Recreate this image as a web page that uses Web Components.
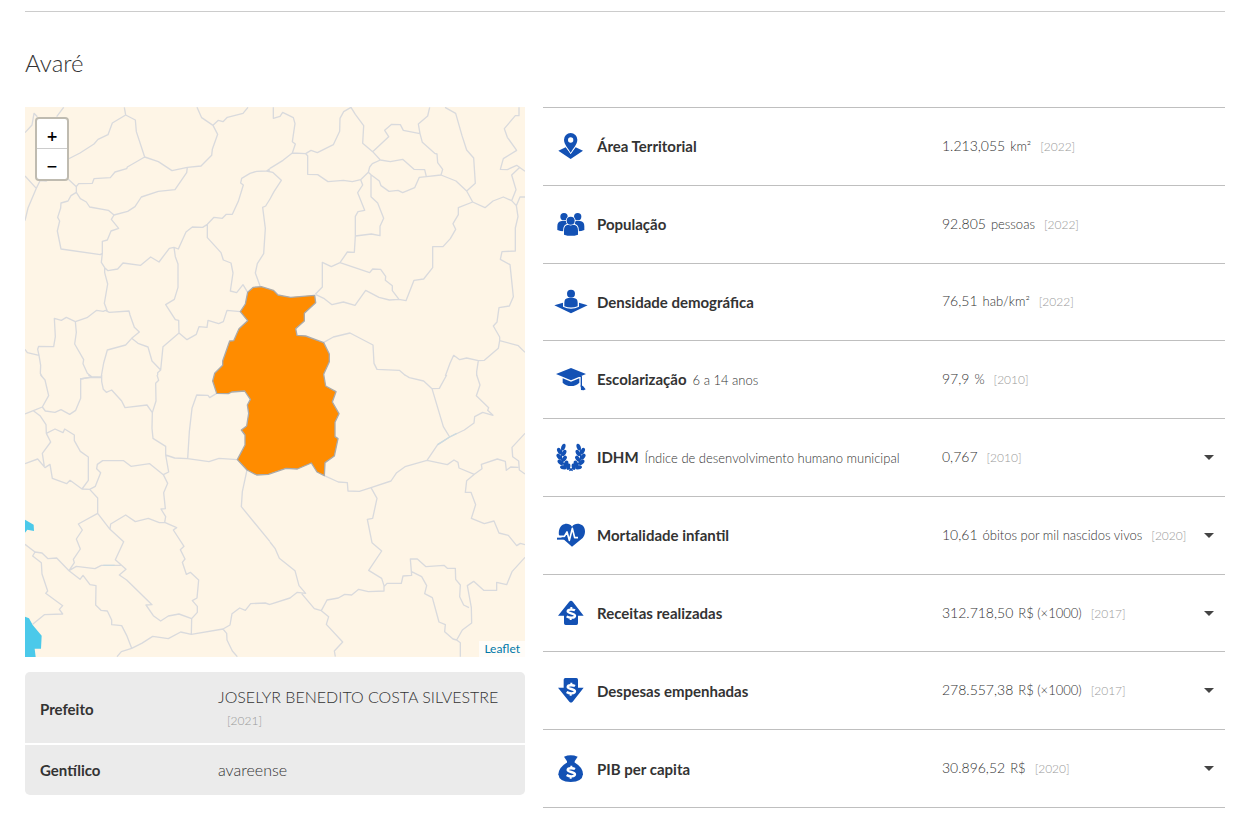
<!DOCTYPE html>
<html lang="pt-BR">
<head>
<meta charset="utf-8">
<title>Avaré</title>
<style>
  body { margin: 0; background: #fff; color: #333; font-family: Lato, "Open Sans", sans-serif; }
</style>
</head>
<body>
<city-panel>
  <span slot="title">Avaré</span>
  <city-map slot="map"></city-map>
  <city-facts slot="facts"></city-facts>
  <city-indicator icon="area" value="1.213,055" unit="km²" year="2022">Área Territorial</city-indicator>
  <city-indicator icon="people" value="92.805" unit="pessoas" year="2022">População</city-indicator>
  <city-indicator icon="density" value="76,51" unit="hab/km²" year="2022">Densidade demográfica</city-indicator>
  <city-indicator icon="school" value="97,9" unit="%" year="2010" note="6 a 14 anos">Escolarização</city-indicator>
  <city-indicator icon="laurel" value="0,767" year="2010" note="Índice de desenvolvimento humano municipal" expandable>IDHM</city-indicator>
  <city-indicator icon="heart" value="10,61" unit="óbitos por mil nascidos vivos" year="2020" expandable>Mortalidade infantil</city-indicator>
  <city-indicator icon="income" value="312.718,50" unit="R$ (×1000)" year="2017" expandable>Receitas realizadas</city-indicator>
  <city-indicator icon="expense" value="278.557,38" unit="R$ (×1000)" year="2017" expandable>Despesas empenhadas</city-indicator>
  <city-indicator icon="bag" value="30.896,52" unit="R$" year="2020" expandable>PIB per capita</city-indicator>
</city-panel>

<template id="panel">
  <style>
    :host { display: block; padding: 11px 28px 12px 25px; }
    header { border-top: 1px solid #ccc; padding: 36px 0 29px; }
    h1 { margin: 0; font-size: 24px; line-height: 30px; font-weight: 300; }
    .columns { display: grid; grid-template-columns: 500fr 682fr; gap: 18px; align-items: start; }
    .left { display: grid; gap: 15px; min-width: 0; }
    .list { display: grid; grid-auto-rows: 1fr; min-height: 700px; border-top: 1px solid #bfbfbf; }
  </style>
  <header><h1><slot name="title"></slot></h1></header>
  <div class="columns">
    <div class="left"><slot name="map"></slot><slot name="facts"></slot></div>
    <div class="list"><slot></slot></div>
  </div>
</template>

<template id="facts">
  <style>
    :host { display: block; }
    table { width: 100%; border-collapse: separate; border-spacing: 0; background: #ebebeb; border-radius: 5px; table-layout: fixed; }
    th, td { padding: 14px 15px; line-height: 22px; text-align: left; vertical-align: middle; }
    th { width: 163px; font-size: 15px; font-weight: 700; }
    td { padding-left: 0; font-size: 16px; font-weight: 300; }
    tr:first-child > * { padding-bottom: 12px; border-bottom: 2px solid #fff; }
    .year { display: inline-block; margin-left: 9px; font-size: 12px; line-height: 20px; color: #999; }
  </style>
  <table>
    <tr><th scope="row">Prefeito</th><td>JOSELYR BENEDITO COSTA SILVESTRE <span class="year">[2021]</span></td></tr>
    <tr><th scope="row">Gentílico</th><td>avareense</td></tr>
  </table>
</template>

<template id="indicator">
  <style>
    :host { display: grid; grid-template-columns: 54px 345fr 251fr 32px; align-items: center; border-bottom: 1px solid #bfbfbf; }
    city-icon { margin-left: 12px; }
    .label { font-size: 15px; font-weight: 700; line-height: 20px; white-space: nowrap; }
    .note { margin-left: 6px; font-size: 13px; font-weight: 300; }
    .data { font-size: 14px; font-weight: 300; line-height: 20px; white-space: nowrap; }
    .unit { margin-left: 5px; font-size: 13px; }
    .year { margin-left: 9px; font-size: 12px; color: #999; }
    button { width: 32px; height: 32px; padding: 0; border: 0; background: none; display: grid; place-items: center; cursor: pointer; }
    button::before { content: ""; border: 5px solid transparent; border-top-color: #444; border-bottom: 0; }
    [hidden] { display: none; }
  </style>
  <city-icon></city-icon>
  <div class="label"><slot></slot><span class="note"></span></div>
  <div class="data"><span class="value"></span><span class="unit"></span><span class="year"></span></div>
  <button type="button" aria-expanded="false" aria-label="Expandir"></button>
</template>

<template id="map">
  <style>
    :host { display: block; position: relative; height: 550px; background: #fef5e6; overflow: hidden; }
    svg { display: block; width: 100%; height: 100%; }
    .borders { fill: none; stroke: #d9dadd; stroke-width: 4; stroke-linejoin: round; }
    .zoom { position: absolute; left: 10px; top: 10px; border: 2px solid #bfbbb0; border-radius: 4px; background: #fff; display: grid; }
    .zoom button { box-sizing: border-box; width: 30px; height: 30px; padding: 4px 0 0; border: 0; background: none; color: #000; font: 700 14px/24px "DejaVu Sans", sans-serif; cursor: pointer; }
    .zoom button:first-child { border-bottom: 1px solid #ccc; }
    a { position: absolute; right: 0; bottom: 0; padding: 0 5px; background: rgba(255,255,255,.7); color: #0078a8; font-size: 12px; line-height: 16px; text-decoration: none; }
  </style>
  <svg viewBox="0 0 1500 1650" preserveAspectRatio="xMidYMid slice" role="img" aria-label="Mapa de Avaré">
    <g class="borders">
      <path transform="translate(-15 -21)" d="M15 98L36 75 42 40 52 50M131 22L110 50M313 22L317 45 346 60 349 95 374 171 415 185 456 212 502 202 543 198 575 166 577 148 593 103 579 76 545 53 531 22M317 45L277 69 264 104 234 118 222 132 180 159 145 177M579 76L595 61 609 65 622 52 669 40 684 22M374 171L322 201 320 206 285 216 271 233 222 236 217 250 176 251 169 260 169 277 153 287 144 303 123 309 122 324 113 352 119 363 112 393 123 447 241 464 247 460M145 238L169 260M169 277L181 296 199 306 209 321 265 331 282 345 323 334 345 320 364 291 415 274 465 269 500 218 502 202M282 345L274 358 296 385 273 393 262 420 247 424 247 460 244 487 254 503 264 512 293 507 309 489 362 496 392 471 417 486 448 445 462 442 475 447 498 396 517 381 548 382 562 373 582 352 607 355 619 343 637 343 655 304 670 255 662 249 665 235 690 220 710 214 740 213 750 206M740 213L750 213M15 228L49 265 60 242 79 243 83 240M49 265L24 324 15 362M562 373L562 413 603 458 610 480 633 489 639 519 631 573 650 578 669 554 683 577M750 297L737 318 728 322 736 385 731 461 712 491 706 519 721 560M462 442L466 470 474 492 474 562 463 598 437 614 466 659 476 661 477 699 501 719 529 703 537 680 561 682 564 661 596 671 610 665 621 631 661 635M254 503L254 518 263 552 253 610 262 634 268 637 327 633 330 645 343 682 358 696 335 715 317 735 262 750 251 789 244 828M262 634L256 631 250 634 230 631 201 653 166 665 139 652 124 661 103 655 106 710 101 740 56 739 53 748 57 766 62 796 61 820 66 830M15 748L22 758 57 766M166 665L169 697 164 732 191 779 189 791 202 820 216 831 245 831M216 831L180 837M335 715L354 730 384 741 396 783 422 810 429 740 477 699M422 810L413 818 413 826"/>
      <path transform="translate(735 -21)" d="M10 22L10 55 30 49 38 37 70 53 75 71 67 125 76 132 67 159 39 181 0 205M67 159L107 161 123 151 142 158 190 134 209 94 210 55 221 35 243 22 256 43 281 77 278 130 308 155 331 180 307 191 299 201 295 217 272 239 247 245 220 241 174 245 143 224 113 223 113 167 107 161M308 155L356 110 344 91 365 73 391 74 400 91 450 101 445 72 473 48 479 22M450 101L457 127 494 160 501 162 503 188 518 208 513 225 469 230 448 232 434 263 398 278 384 271 357 274 333 257 328 243 303 224 295 217M331 180L361 185 398 178 432 208 464 209 469 230M303 224L303 290 323 309 341 355 330 379 330 407 304 402 256 408M272 239L278 255 263 278 284 331 264 335 256 349 256 408 253 457 232 456 210 488 184 500 157 487 157 561 136 583M210 488L299 518 308 507 332 508 347 529 346 541 367 557 367 572 387 598 408 602 432 541 461 537 488 503 488 440 519 440 541 416 557 388 549 371 565 344 565 323 608 306 590 273 558 243 513 225M387 598L358 600 327 592 287 571 255 616 220 606 186 614 163 596 136 583M525 22L557 40 576 107 590 150 611 174 616 250 590 273M608 306L645 323 669 303 700 291 725 302 739 317 750 291 765 291M747 22L747 47 736 47 703 86 712 112 740 151 700 176 691 208 712 209 740 196 765 214M748 203L725 225 738 269 725 302M739 317L744 350 736 384 736 453 696 455 691 478 720 494 730 590 718 618 687 623 681 666 670 678 689 711 689 722 745 737 765 757M689 722L685 745 643 781 625 782 590 774 569 779 551 766 540 790 526 828M625 782L620 815 620 827M160 728L190 711 240 699 309 735 312 790 321 808 388 811 407 827M-10 213L8 217 34 241 12 275 0 297"/>
      <path transform="translate(-15 804)" d="M62 0L75 15 86 62 67 96 40 107 15 117M67 96L76 108 105 112 123 104 149 118 167 106 182 70 182 12 210 7 245 8M205 0L215 6M245 0L245 20 250 43 259 52 275 45 305 78 315 98 381 90 397 113 408 78 407 25 416 16 411 0M397 113L396 160 399 190 437 214 437 240 446 291 430 299 443 325 431 353 436 401 423 402 437 425 434 442 418 443 385 430 346 440 317 420 272 447 270 463M437 240L464 249 503 251 567 260 597 250 652 254M503 251L508 170 516 100 530 60 564 61 569 68 590 55M40 107L60 122 78 149 79 175 105 162 129 173 134 162 163 180 163 197 181 229 205 246 205 316 186 342 150 316 140 326 97 310 90 268 75 278 53 252 15 266M79 175L92 201 67 235 73 275M186 342L209 343 226 334 242 293 230 281 232 268 248 257 311 257 333 274 389 266 430 299M209 343L233 369 233 415 175 447 187 465 169 492 181 522 160 553 163 563 147 587 180 613 189 601 210 629 228 632 227 690 243 706 262 708 275 735 275 749 305 752 320 781 335 820 304 830 291 845M233 415L270 463 311 500 286 554 318 583 298 600 320 615 396 689 378 690 400 722 422 738 445 723 477 717 515 731 532 712 532 694 517 677 531 669 536 615 511 592 499 598 487 562 495 552 481 524 492 514 460 465 470 458 434 442M147 587L169 574 225 581 244 571 302 571M147 587L110 549 84 551 66 534 45 531 15 508M45 531L38 543 64 563 66 597 83 648 77 655 128 692 118 703 128 717 73 719 38 748M515 731L514 778 482 771 445 791 398 784 365 805 335 820M514 778L609 762 630 750 636 716 659 699 676 706 692 686 736 684 750 689M609 762L620 775 621 795 637 828 652 845M681 285L667 350 664 395 750 500"/>
      <path transform="translate(735 804)" d="M405 0L418 8 461 18 486 41 508 40 530 0M486 41L520 155 539 186 583 165 612 144 614 125 638 112 669 121 653 106 656 98 619 62 630 30 620 0M539 186L503 209 471 256 405 275 380 293 363 318 303 338 268 349 234 348 232 323 205 321 163 302M471 256L532 269 552 255 564 262 567 279 613 298 636 281 634 268 682 252 706 259 709 286 722 276 745 277M765 175L726 217 728 245 746 258 748 285 765 297M613 298L590 317 586 352 603 352 617 389 604 430 643 446 672 438 687 474 715 481 740 512 751 505 765 509M303 338L321 370 308 430 292 433 306 503 335 528 296 586 335 610 342 632 342 648 295 650 266 643 245 660 224 658 205 669 171 675 154 707 176 725 169 748 218 801 193 828 196 845M342 635L351 625 394 625 399 603 425 601 421 552 442 552 468 575 522 571 532 580 556 580 557 613 571 630 569 665 581 690 597 698M425 590L455 605 470 632 464 656 487 668 507 741 526 749 524 770 549 792 560 795 577 765 605 744 604 698 592 632 611 619 641 646 680 646 680 622 710 629 726 590 765 547M560 795L571 803 571 845M0 501L15 520 28 550 75 587 87 632 107 655 82 652 60 669 0 688M95 656L133 701 154 707"/>
    </g>
    <g transform="translate(-15 804)">
      <path fill="#4bc9ea" d="M15 434L41 449 42 468 22 464 15 473ZM15 725L27 730 38 750 65 782 63 821 44 821 47 846H15Z"/>
      <path fill="none" stroke="#ccdbe0" stroke-width="4" d="M250 571H284M1253 209L1289 186 1310 175"/>
    </g>
    <path transform="translate(-15 -21)" fill="#ff8c00" stroke="#aaa" stroke-width="4" stroke-linejoin="round" d="M683 577L700 562 724 560 760 571 774 585 812 592 884 586 887 608 853 640 853 663 827 686 831 706 857 708 911 728 928 762 928 785 911 823 917 858 948 875 937 906 957 941 945 967 945 1010 954 1016 943 1068 915 1088 913 1127 891 1116 874 1089 832 1107 798 1105 745 1123 710 1125 681 1110 652 1079 675 1035 675 1005 664 990 680 978 686 940 682 915 691 898 674 873 635 876 625 881 590 880 578 843 584 820 608 796 608 783 629 723 641 722 657 686 683 662 661 635 676 612Z"/>
  </svg>
  <div class="zoom">
    <button type="button" aria-label="Aproximar">+</button>
    <button type="button" aria-label="Afastar">−</button>
  </div>
  <a href="#leaflet">Leaflet</a>
</template>

<script>
const stamp = (host, id) => {
  const root = host.attachShadow({ mode: "open" });
  root.append(document.getElementById(id).content.cloneNode(true));
  return root;
};

const dollar = y => `<g transform="translate(48 ${y})" fill="none" stroke="#fff"><path stroke-width="7" d="M12-9C7-12-10-13-10-6S12-1 12 7-6 14-13 9"/><path stroke-width="6" d="M1-19V-10M-1 11V20"/></g>`;

/* Half of the laurel wreath: [centre x, centre y, rotation] of each leaf. */
const leaves = [[25,18,20],[13,30,-25],[27,36,30],[12,47,-35],[28,53,35],[16,64,-45],[33,68,25],[25,79,-80],[40,77,10]];
const branch = leaves.map(([x, y, r]) => `<ellipse cx="${x}" cy="${y}" rx="6" ry="10" transform="rotate(${r} ${x} ${y})"/>`).join("")
  + `<path fill="none" stroke="#1351b4" stroke-width="4" d="M21 22Q12 62 34 76L53 89"/>`;

const icons = {
  area: `<path d="M10 62L32 52 47 72 62 52 84 62 47 87Z"/><path stroke="#fff" stroke-width="4" paint-order="stroke" d="M47 68C40 55 27 43 27 29A20 20 0 0 1 67 29C67 43 54 55 47 68Z"/><circle cx="47" cy="30" r="8" fill="#fff"/>`,
  people: `<circle cx="27" cy="26" r="11"/><circle cx="68" cy="26" r="11"/><path d="M7 66V55Q7 40 20 39H34L40 68Q22 72 7 66ZM88 66V55Q88 40 75 39H61L55 68Q73 72 88 66Z"/><g stroke="#fff" stroke-width="5" paint-order="stroke"><path d="M27 80V67Q27 51 40 50H55Q69 51 69 67V80Q48 87 27 80Z"/><circle cx="47" cy="38" r="12"/></g>`,
  density: `<path d="M-2 58L24 50V62Q48 74 72 62V50L98 58 48 82Z"/><circle cx="48" cy="23" r="12"/><path d="M28 61V50Q28 37 40 36H56Q68 37 68 50V61Q48 68 28 61Z"/>`,
  school: `<path d="M3 30L48 12 93 30 48 49ZM23 43L48 53 73 43V56Q63 66 48 66T23 56Z"/><path fill="none" stroke="#1351b4" stroke-width="4" d="M48 30L79 38V68"/><path d="M77 64L84 66 92 76 86 79 78 78Z"/>`,
  laurel: `${branch}<g transform="matrix(-1 0 0 1 96 0)">${branch}</g>`,
  heart: `<path d="M51 23C58 12 73 12 82 19 93 28 92 47 83 57L51 83 12 49C10 36 14 24 21 19 31 12 44 13 51 23Z"/><path fill="none" stroke="#fff" stroke-width="5" stroke-linejoin="round" d="M4 52H28L36 39 43 64 52 28 59 56H69"/><path fill="none" stroke="#1351b4" stroke-width="6" d="M6 59H29"/>`,
  income: `<path d="M48 11Q51 11 54 15L86 56H69V79Q69 84 64 84H32Q27 84 27 79V56H9L42 15Q45 11 48 11Z"/>${dollar(49)}`,
  expense: `<path d="M31 9H64Q69 9 69 14V38H86L53 80Q48 85 43 80L9 38H26V14Q26 9 31 9Z"/>${dollar(42)}`,
  bag: `<path d="M27 11Q47 3 68 11L59 25H36Z"/><path d="M35 29H60Q84 43 84 64 82 87 47 87T10 64Q11 43 35 29Z"/><path d="M36 24H59V30H36Z"/>${dollar(57)}`
};

class CityIcon extends HTMLElement {
  static observedAttributes = ["name"];
  constructor() { super(); this.attachShadow({ mode: "open" }); }
  attributeChangedCallback(_, __, name) {
    this.shadowRoot.innerHTML = `<style>:host{display:block;width:32px;height:32px}svg{display:block;overflow:visible}</style>
      <svg width="32" height="32" viewBox="0 0 96 96" fill="#1351b4" aria-hidden="true">${icons[name] || ""}</svg>`;
  }
}

class CityPanel extends HTMLElement { constructor() { super(); stamp(this, "panel"); } }
class CityMap extends HTMLElement { constructor() { super(); stamp(this, "map"); } }
class CityFacts extends HTMLElement { constructor() { super(); stamp(this, "facts"); } }

class CityIndicator extends HTMLElement {
  constructor() {
    super();
    const root = stamp(this, "indicator");
    const button = root.querySelector("button");
    button.addEventListener("click", () =>
      button.setAttribute("aria-expanded", String(button.getAttribute("aria-expanded") !== "true")));
  }
  connectedCallback() {
    const root = this.shadowRoot;
    const fill = (name, text) => {
      const el = root.querySelector("." + name);
      el.textContent = text;
      el.hidden = !text;
    };
    root.querySelector("city-icon").setAttribute("name", this.getAttribute("icon"));
    fill("note", this.getAttribute("note") || "");
    fill("value", this.getAttribute("value"));
    fill("unit", this.getAttribute("unit") || "");
    fill("year", `[${this.getAttribute("year")}]`);
    root.querySelector("button").hidden = !this.hasAttribute("expandable");
  }
}

customElements.define("city-icon", CityIcon);
customElements.define("city-map", CityMap);
customElements.define("city-facts", CityFacts);
customElements.define("city-indicator", CityIndicator);
customElements.define("city-panel", CityPanel);
</script>
</body>
</html>
